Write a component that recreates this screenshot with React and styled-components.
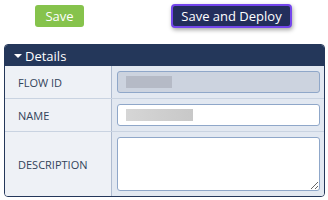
import React from "react";
import styled, { createGlobalStyle } from "styled-components";

const Global = createGlobalStyle`
  html, body { margin: 0; padding: 0; background: #ffffff; }
  body { font-family: "Open Sans", "Liberation Sans", sans-serif; }
  * { box-sizing: border-box; }
`;

const Page = styled.div`
  width: 328px;
  height: 200px;
  overflow: hidden;
`;

const Toolbar = styled.div`
  display: flex;
  align-items: flex-start;
  height: 44px;
  padding: 4px 0 0 35px;
`;

const Button = styled.button`
  font-family: "Open Sans", "Liberation Sans", sans-serif;
  font-size: 13px;
  color: #ffffff;
  border-radius: 3px;
  cursor: pointer;
  display: flex;
  align-items: center;
  justify-content: center;
  padding: 0;
  line-height: 1;
`;

const SaveButton = styled(Button)`
  margin-top: 1px;
  width: 49px;
  height: 22px;
  background: #86c34c;
  border: none;
`;

const DeployButton = styled(Button)`
  margin-left: 87px;
  width: 121px;
  height: 24px;
  background: #232e5c;
  border: 2px solid #7446ec;
  border-radius: 4px;
  box-shadow: 1px 2px 4px rgba(0, 0, 0, 0.35);
`;

const Panel = styled.div`
  margin: 0 3px 0 4px;
  border: 1px solid #24375a;
  border-radius: 4px;
  overflow: hidden;
  background: #eef1f6;
`;

const Header = styled.div`
  height: 21px;
  background: #24375a;
  color: #ffffff;
  font-size: 13px;
  display: flex;
  align-items: center;
  padding-left: 9px;
  gap: 3px;
`;

const Caret = styled.span`
  display: inline-block;
  width: 0;
  height: 0;
  border-left: 4px solid transparent;
  border-right: 4px solid transparent;
  border-top: 4px solid #ffffff;
  margin-top: 1px;
`;

const Row = styled.div`
  display: grid;
  grid-template-columns: 106px 1px 1fr;
  border-top: ${(p) => (p.$first ? "none" : "1px solid #c9d3e1")};
`;

const Label = styled.div`
  display: flex;
  align-items: center;
  padding-left: 13px;
  font-size: 11px;
  color: #33435a;
  background: #eef1f6;
`;

const Divider = styled.div`
  background: #aebbd0;
`;

const Value = styled.div`
  background: #e2e8f1;
  padding: 5px 4px 5px 5px;
`;

const Field = styled.div`
  height: ${(p) => p.$h}px;
  border: 1px solid #8fa7c9;
  border-radius: 3px;
  background: ${(p) => (p.$disabled ? "#ccd3df" : "#ffffff")};
  display: flex;
  align-items: center;
  padding-left: 8px;
`;

const Redacted = styled.div`
  height: 12px;
  width: ${(p) => p.$w}px;
  background: ${(p) => p.$bg};
`;

const TextArea = styled.textarea`
  display: block;
  width: 100%;
  height: 54px;
  border: 1px solid #8fa7c9;
  border-radius: 3px;
  background: #ffffff;
  resize: both;
  font-family: inherit;
  margin: 0;
`;

export default function App() {
  return (
    <Page>
      <Global />
      <Toolbar>
        <SaveButton>Save</SaveButton>
        <DeployButton>Save and Deploy</DeployButton>
      </Toolbar>
      <Panel>
        <Header>
          <Caret />
          <span>Details</span>
        </Header>
        <Row $first>
          <Label>FLOW ID</Label>
          <Divider />
          <Value>
            <Field $h={22} $disabled>
              <Redacted $w={46} $bg="#b5bac6" />
            </Field>
          </Value>
        </Row>
        <Row>
          <Label>NAME</Label>
          <Divider />
          <Value>
            <Field $h={22}>
              <Redacted $w={67} $bg="linear-gradient(90deg, #d6d6d6, #c8c8c8)" />
            </Field>
          </Value>
        </Row>
        <Row>
          <Label>DESCRIPTION</Label>
          <Divider />
          <Value>
            <TextArea />
          </Value>
        </Row>
      </Panel>
    </Page>
  );
}
